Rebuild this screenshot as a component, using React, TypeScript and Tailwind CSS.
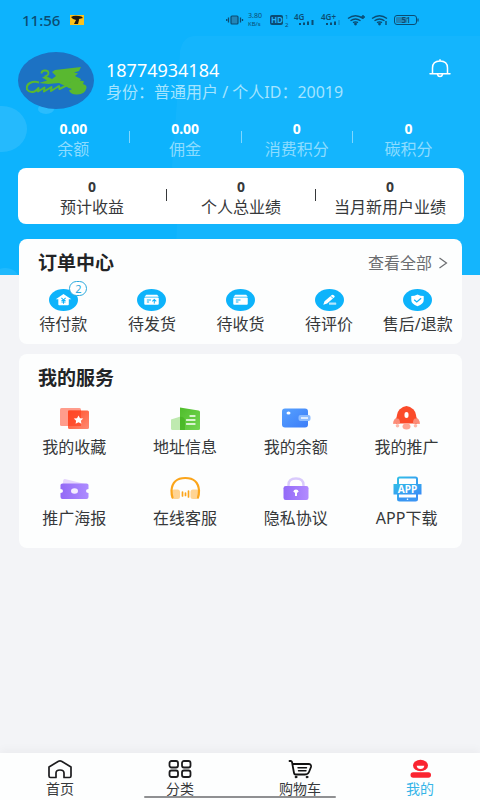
import type { ReactNode } from "react";

const assets = [
  { value: "0.00", label: "余额" },
  { value: "0.00", label: "佣金" },
  { value: "0", label: "消费积分" },
  { value: "0", label: "碳积分" },
];

const earnings = [
  { value: "0", label: "预计收益" },
  { value: "0", label: "个人总业绩" },
  { value: "0", label: "当月新用户业绩" },
];

const orders = [
  { label: "待付款", icon: <HouseYen />, badge: 2 },
  { label: "待发货", icon: <BoxOut /> },
  { label: "待收货", icon: <BoxIn /> },
  { label: "待评价", icon: <Pencil /> },
  { label: "售后/退款", icon: <ShieldCheck /> },
];

const services = [
  { label: "我的收藏", icon: <Favorites /> },
  { label: "地址信息", icon: <Building /> },
  { label: "我的余额", icon: <Wallet /> },
  { label: "我的推广", icon: <Rocket /> },
  { label: "推广海报", icon: <Ticket /> },
  { label: "在线客服", icon: <Headset /> },
  { label: "隐私协议", icon: <Lock /> },
  { label: "APP下载", icon: <AppPhone /> },
];

const tabs = [
  { label: "首页", icon: <HomeIcon /> },
  { label: "分类", icon: <GridIcon /> },
  { label: "购物车", icon: <CartIcon /> },
  { label: "我的", icon: <MeIcon />, active: true },
];

function OrderDisc({ children }: { children: ReactNode }) {
  return (
    <svg className="h-[22px] w-[29px]" viewBox="0 0 28 22" preserveAspectRatio="none" fill="none">
      <ellipse cx="14" cy="11" rx="14" ry="11" fill="#0db3fb" />
      {children}
    </svg>
  );
}

function HouseYen() {
  return (
    <OrderDisc>
      <path d="M14 5 6.500 10.300h2.500V15.500q0 .8.8.8h8.500q.8 0 .8-.8V10.300h2.500Z" fill="#fff" />
      <path d="m12 8.800 2 2.200 2-2.200M12 11.400h4M12 13h4M14 11v3.700" stroke="#0db3fb" strokeWidth="1" />
    </OrderDisc>
  );
}

function BoxOut() {
  return (
    <OrderDisc>
      <path d="M9 5.800h10.500l1.500 2H7.300Z" fill="#fff" />
      <rect x="7" y="8.400" width="14" height="7.400" rx="1" fill="#fff" />
      <path d="M9.500 11h4M9.500 13h2.200M16.700 14.500V11M14.800 12.300l1.900-1.900 1.900 1.900" stroke="#0db3fb" strokeWidth="1" />
    </OrderDisc>
  );
}

function BoxIn() {
  return (
    <OrderDisc>
      <path d="M9 5.800h10.500l1.500 2H7.300Z" fill="#fff" />
      <rect x="7" y="8.400" width="14" height="7.400" rx="1" fill="#fff" />
      <path d="M9.500 11h4.500M9.500 13h2.500" stroke="#0db3fb" strokeWidth="1" />
    </OrderDisc>
  );
}

function Pencil() {
  return (
    <OrderDisc>
      <path d="m8 15.800 1.200-3.500 7-6.300q.7-.6 1.500 0l1 .8q.8.7 0 1.400l-7 6.300Z" fill="#fff" />
      <path d="m15 7.300 2.700 2" stroke="#0db3fb" strokeWidth=".7" />
      <rect x="13.500" y="13.500" width="7" height="2.300" rx=".6" fill="#b4e6fe" />
    </OrderDisc>
  );
}

function ShieldCheck() {
  return (
    <OrderDisc>
      <path d="M14 5.500q2.800 1.500 6 1.500v4q0 4-6 6.300Q8 15 8 11V7q3.200 0 6-1.500Z" fill="#fff" />
      <path d="m10.800 10.800 2.500 2.200 4.200-3.700" stroke="#0db3fb" strokeWidth="1.200" />
    </OrderDisc>
  );
}

function Favorites() {
  return (
    <svg className="h-7 w-8" viewBox="0 0 32 28">
      <defs>
        <linearGradient id="fav" x1="0" y1="0" x2="1" y2="1">
          <stop offset="0" stopColor="#ff4a22" />
          <stop offset="1" stopColor="#ff8b74" />
        </linearGradient>
      </defs>
      <rect x="2" y="4" width="21" height="18" rx="1.500" fill="#ff9d8c" />
      <rect x="10" y="6.500" width="21" height="18.500" rx="1.500" fill="url(#fav)" />
      <path d="M10 6.500h13V22H10Z" fill="#ff4424" opacity=".7" />
      <path d="m20.500 11.500 1.500 2.700 3.200.4-2.300 2.100.5 3-2.900-1.400-2.900 1.400.5-3-2.300-2.100 3.200-.4Z" fill="#fff" />
    </svg>
  );
}

function Building() {
  return (
    <svg className="h-7 w-8" viewBox="0 0 32 28">
      <defs>
        <linearGradient id="bld" x1="0" y1="0" x2="1" y2="1">
          <stop offset="0" stopColor="#4fbd2b" />
          <stop offset="1" stopColor="#74d653" />
        </linearGradient>
      </defs>
      <path d="m2 15.500 9.500-3V26H3.500Q2 26 2 24.500Z" fill="#bfeab0" />
      <path d="m11 3.500 18.500 3Q31 6.800 31 8v16.500q0 1.500-1.500 1.500H11Z" fill="url(#bld)" />
      <path d="M11 12.800q5 0 5 4V26h-5Z" fill="#3fb01c" opacity=".6" />
      <path d="M21 12h5M17.500 16h8.500M17.500 20h8.500" stroke="#fff" strokeWidth="1.300" strokeLinecap="round" />
    </svg>
  );
}

function Wallet() {
  return (
    <svg className="h-7 w-8" viewBox="0 0 32 28">
      <defs>
        <linearGradient id="wal" x1="0" y1="0" x2="1" y2="1">
          <stop offset="0" stopColor="#56a1ff" />
          <stop offset="1" stopColor="#3c7df8" />
        </linearGradient>
      </defs>
      <rect x="2" y="4.500" width="26" height="19" rx="3" fill="url(#wal)" />
      <ellipse cx="8.500" cy="9" rx="2" ry="1.600" fill="#fff" />
      <rect x="18.500" y="11" width="12" height="6" rx="2" fill="#8cbcff" />
      <path d="M21 14h7" stroke="#fff" strokeWidth="1.400" />
    </svg>
  );
}

function Rocket() {
  return (
    <svg className="h-7 w-8" viewBox="0 0 32 28">
      <path d="M6 13q-4 2.500-4 7h4ZM25 13q4 2.500 4 7h-5Z" fill="#ffaa99" />
      <path d="M5 19.500q.500-11 3.500-14Q12 2 15.500 2t7 3.500q3 3 3.500 14Z" fill="#fb4b2a" />
      <path d="M2.500 19.500q0-5 4-5 2.500 0 2.500 5ZM28.500 19.500q0-5-4-5-2.500 0-2.500 5Z" fill="#fb8c78" />
      <rect x="13.500" y="8" width="4" height="6" rx="2" fill="#fff" />
      <ellipse cx="15.500" cy="22.500" rx="4" ry="3" fill="#ffa593" />
      <circle cx="6.500" cy="21.800" r="1.800" fill="#ffb9aa" />
      <circle cx="24.500" cy="21.800" r="1.800" fill="#ffb9aa" />
    </svg>
  );
}

function Ticket() {
  return (
    <svg className="h-7 w-8" viewBox="0 0 32 28">
      <defs>
        <linearGradient id="tic">
          <stop offset="0" stopColor="#9369f6" />
          <stop offset="1" stopColor="#ad8cff" />
        </linearGradient>
      </defs>
      <path d="m7 4 20 5v4H5V8Q5 3.500 7 4Z" fill="#e6d6fd" />
      <path d="M4.500 8.500h24q2 0 2 1.500v4q-2.500 0-2.500 2t2.500 2v4q0 2-2 2h-24q-2 0-2-2v-4q2.500 0 2.500-2t-2.500-2v-4q0-1.500 2-1.500Z" fill="url(#tic)" />
      <ellipse cx="16.500" cy="16" rx="3.500" ry="2.800" fill="#f4ecff" />
    </svg>
  );
}

function Headset() {
  return (
    <svg className="h-7 w-8" viewBox="0 0 32 28" fill="none">
      <rect x="2.500" y="14.500" width="8.500" height="9.500" rx="2.500" fill="#ffd493" />
      <rect x="21.500" y="14.500" width="8.500" height="9.500" rx="2.500" fill="#ffd493" />
      <path d="M3.500 22.500q-1-2-1-7Q3.500 3 16.300 3T30 15.500q0 5-1 7" stroke="#fba51b" strokeWidth="2.200" strokeLinecap="round" />
      <path d="M13.500 17v4M16.500 18v2.500M19.500 16v6" stroke="#fba51b" strokeWidth="1.700" strokeLinecap="round" />
    </svg>
  );
}

function Lock() {
  return (
    <svg className="h-7 w-8" viewBox="0 0 32 28">
      <defs>
        <linearGradient id="lck">
          <stop offset="0" stopColor="#936af8" />
          <stop offset="1" stopColor="#b28bfe" />
        </linearGradient>
      </defs>
      <path d="M8.500 12v-2q0-6.500 7.500-6.500t7.500 6.500v2" fill="none" stroke="#d9cafc" strokeWidth="2.400" />
      <rect x="3.500" y="11" width="25" height="14" rx="2.200" fill="url(#lck)" />
      <ellipse cx="16" cy="16.200" rx="2.400" ry="1.800" fill="#fff" />
      <path d="M16 16v5" stroke="#fff" strokeWidth="2" />
    </svg>
  );
}

function AppPhone() {
  return (
    <svg className="h-7 w-8" viewBox="0 0 32 28">
      <defs>
        <linearGradient id="app" x1="0" y1="0" x2="1" y2="1">
          <stop offset="0" stopColor="#32bde7" />
          <stop offset="1" stopColor="#398bf7" />
        </linearGradient>
      </defs>
      <rect x="7" y="2.500" width="19" height="23" rx="1.500" fill="#fff" stroke="url(#app)" strokeWidth="2" />
      <path d="M7 22.500h19V26H7Z" fill="#3a96f3" />
      <circle cx="16.500" cy="24.300" r=".8" fill="#fff" />
      <rect x="2.500" y="9" width="28" height="10.500" fill="url(#app)" />
      <text x="16.500" y="17.500" textAnchor="middle" fill="#fff" fontSize="10" fontWeight="700" fontFamily="Noto Sans, sans-serif">
        APP
      </text>
    </svg>
  );
}

function HomeIcon() {
  return (
    <svg className="h-5 w-7" viewBox="0 0 28 20" fill="none" stroke="#1c1c1e" strokeWidth="1.700" strokeLinejoin="round">
      <path d="M3 8 12.500 2.200q1.500-.8 3 0L25 8v9q0 1.500-1.500 1.500H18V14q0-3-4-3t-4 3v4.500H4.500Q3 18.500 3 17Z" />
    </svg>
  );
}

function GridIcon() {
  return (
    <svg className="h-5 w-7" viewBox="0 0 28 20" fill="none" stroke="#1c1c1e" strokeWidth="1.800">
      <rect x="3.500" y="2" width="8.500" height="6.500" rx="2" />
      <rect x="16" y="2" width="8.500" height="6.500" rx="2" />
      <rect x="3.500" y="11.500" width="8.500" height="6.500" rx="2" />
      <rect x="16" y="11.500" width="8.500" height="6.500" rx="2" />
    </svg>
  );
}

function CartIcon() {
  return (
    <svg className="h-5 w-7" viewBox="0 0 28 20" fill="none" stroke="#111" strokeLinecap="round" strokeLinejoin="round">
      <path d="M3.500 2h1.200q1 0 1.300 1L8 14q.3 1.500 1.500 1.500H19q3 0 4-2.500l2-5q.5-3-2.500-3H7" strokeWidth="1.800" />
      <path d="M12 8.800h8.500M12.500 11.800H20" strokeWidth="1.400" />
      <circle cx="10" cy="18" r=".9" fill="#111" />
      <circle cx="21" cy="18" r=".9" fill="#111" />
    </svg>
  );
}

function MeIcon() {
  return (
    <svg className="h-5 w-7" viewBox="0 0 28 20">
      <ellipse cx="14.500" cy="6.500" rx="7.500" ry="5.800" fill="#fa2430" />
      <path d="M10.700 6.800h7.600q-.5 3.200-3.800 3.200t-3.800-3.200Z" fill="#fff" />
      <rect x="4.500" y="13.200" width="20.500" height="5.500" rx="2.700" fill="#fa2430" />
    </svg>
  );
}

function StatusIcons() {
  return (
    <svg className="h-5 w-[194px]" viewBox="0 0 194 20" fill="none" stroke="#0b4c73" fontFamily="Noto Sans, sans-serif">
      <rect x="5" y="6" width="7" height="8" rx="1" fill="#2385b8" strokeWidth="1.200" />
      <path d="M2.500 7.500v5M14.500 7.500v5M.7 9v2M16.500 9v2" strokeWidth="1.300" />
      <g fill="#0b4c73" stroke="none">
        <text x="22" y="8" fontSize="7">3.80</text>
        <text x="22" y="16" fontSize="6">KB/s</text>
        <rect x="44" y="5" width="13" height="10" rx="2" />
        <text x="59" y="9" fontSize="6">1</text>
        <text x="59" y="17" fontSize="6">2</text>
        <text x="68" y="9.500" fontSize="8" fontWeight="600">4G</text>
        <path d="M73 13h2v2h-2ZM77 12.500h2V15h-2ZM81 11.500h2V15h-2ZM85.500 10h2v5h-2Z" />
        <text x="95" y="9.500" fontSize="8" fontWeight="600">4G+</text>
        <path d="M100 13h2v2h-2ZM104 12.500h2V15h-2ZM108 11.500h2V15h-2Z" />
        <path d="M112 10h2v5h-2Z" opacity=".25" />
        <circle cx="129.500" cy="14" r="1.400" />
        <circle cx="153.500" cy="14" r="1.400" />
        <text x="45" y="13" fontSize="8" fontWeight="700" fill="#20b4fb">HD</text>
      </g>
      <path d="M122 8.500q7.500-5.400 15 0M124.500 10.700q5-3.500 10 0M127 12.700q2.500-1.700 5 0M134.500 7h4.500M137 5v4" strokeWidth="1.400" />
      <path d="M146 8.500q7.500-5.400 15 0M148.500 10.700q5-3.500 10 0M151 12.700q2.500-1.700 5 0M160 11v4" strokeWidth="1.400" />
      <rect x="168.500" y="5.500" width="22" height="9" rx="2.500" strokeWidth="1" />
      <path d="M192 8.500v3" strokeWidth="1.200" />
      <rect x="170" y="7" width="11" height="6" rx="1" fill="#2385b8" stroke="none" />
      <text x="180" y="13" fontSize="8" fontWeight="600" textAnchor="middle" fill="#0b4c73" stroke="none">51</text>
    </svg>
  );
}

function Avatar() {
  return (
    <svg className="h-[57px] w-[76px] shrink-0" viewBox="0 0 76 57" fill="none">
      <ellipse cx="38" cy="28.500" rx="38" ry="28.500" fill="#1c72c4" />
      <path d="M23.500 21.500q0-3 3.500-3t3.500 2.500-4 3.500" stroke="#59b830" strokeWidth="1.800" />
      <path d="m34 20 3-2 26-3-2 4-5 1.500 4 1-3 2.500 6 3-1.500 3L50 31l-3 3-6-3-11 1-9-1 8-2.500-5-3 4-1.500 6 3 4-3Z" fill="#59b830" />
      <path d="M21 30.500q-5-1.500-9 .5T9 37.500q2.500 3.500 7.500 2 3-1.500 4-3.500l-.5 3.500 6.500-4-.5 4 7.500-4.500-.5 4 8-5 .5 3 8-4" stroke="#59b830" strokeWidth="2" strokeLinejoin="round" />
      <path d="m42 28 10 2.500q3-2.500 8-3l-1 2.500q4-2 7-.5l-1 2.500q4 1 3.500 4-1.500 6-9 6.500-6.500.5-8.500-4l3-1.500q-7-1.500-12-9Z" fill="#59b830" />
    </svg>
  );
}

function Stat({ value, label, className = "" }: { value: string; label: string; className?: string }) {
  return (
    <div className="flex flex-1 basis-0 flex-col items-center whitespace-nowrap">
      <span className="text-sm leading-5 font-bold">{value}</span>
      <span className={`leading-5 ${className}`}>{label}</span>
    </div>
  );
}

function Divider({ className }: { className: string }) {
  return <span className={`mt-3 h-3 w-px shrink-0 ${className}`} />;
}

export default function App() {
  return (
    <div className="flex min-h-screen flex-col bg-[#f3f4f7] font-['Noto_Sans','Noto_Sans_CJK_SC',sans-serif] text-base text-[#36383a]">
      <header className="relative overflow-hidden bg-[#0db3fd] pr-4 pb-[51px] pl-[18px] text-white">
        {/* faint bubbles behind the profile */}
        <svg className="absolute inset-0 h-full w-full" preserveAspectRatio="xMidYMin slice" viewBox="0 0 480 275">
          <path d="M195 36h290v240H172q10-60 0-110 5-60 8-115 3-15 15-15Z" fill="#fff" opacity=".03" />
          <ellipse cx="2" cy="129" rx="25" ry="23" fill="#fff" opacity=".1" />
          <ellipse cx="46" cy="109" rx="8" ry="5" fill="#fff" opacity=".12" />
          <ellipse cx="5" cy="279" rx="14" ry="11" fill="#fff" opacity=".08" />
        </svg>

        <div className="relative flex h-10 items-center pr-11 pl-1">
          <span className="text-[15px] font-medium text-[#0b4c73]">11:56</span>
          <svg className="ml-2.5 h-2.5 w-3.5" viewBox="0 0 14 10">
            <rect width="14" height="10" fill="#fcc21b" />
            <path d="M1 2q3-2 8-1 3 0 4 2l-4 1v1L8 9H4l2-4Q3 5 1 2Z" fill="#1f1a12" />
          </svg>
          <div className="ml-auto">
            <StatusIcons />
          </div>
        </div>

        <div className="relative mt-3 flex items-start">
          <Avatar />
          <div className="ml-3 pt-1.5 whitespace-nowrap">
            <div className="text-lg leading-6">18774934184</div>
            <div className="leading-5 text-[#a4e4ff]">身份：普通用户 / 个人ID：20019</div>
          </div>
          <button aria-label="消息" className="mt-1.5 mr-3 ml-auto">
            <svg className="h-5 w-6" viewBox="0 0 24 20" fill="none" stroke="#fff" strokeWidth="1.500" strokeLinecap="round">
              <path d="M4.500 15V10q0-7 7.500-7t7.500 7v5M2 15.700h20M12 1.800V3M9.500 16.500q.5 2 2.500 2t2.500-2" />
            </svg>
          </button>
        </div>

        <div className="relative mt-2.5 flex">
          {assets.map((item, i) => (
            <div key={item.label} className="contents">
              {i > 0 && <Divider className="bg-[#7fd7ff]" />}
              <Stat {...item} className="text-[#8cdcff]" />
            </div>
          ))}
        </div>

        <div className="relative mt-[9px] flex h-14 rounded-lg bg-white pt-[9px] text-[#36383a]">
          {earnings.map((item, i) => (
            <div key={item.label} className="contents">
              {i > 0 && <Divider className="bg-[#36383a]" />}
              <Stat {...item} />
            </div>
          ))}
        </div>
      </header>

      <main className="relative -mt-9 flex flex-col gap-2.5 pr-[18px] pl-[19px]">
        <section className="h-[105px] rounded-lg bg-[#fdfefe] pt-3">
          <div className="flex items-center justify-between pr-3.5 pl-[19px]">
            <h2 className="text-[19px] leading-6 font-bold text-[#222426]">订单中心</h2>
            <a href="#orders" className="flex items-center gap-1.5 leading-6 text-[#6b6d70]">
              查看全部
              <svg className="h-3 w-2.5" viewBox="0 0 10 12" fill="none" stroke="currentColor" strokeWidth="1.200">
                <path d="m1.500 1 7 5-7 5" />
              </svg>
            </a>
          </div>
          <div className="mt-3.5 grid grid-cols-5">
            {orders.map((item) => (
              <a key={item.label} href="#orders" className="relative flex flex-col items-center gap-[3px] whitespace-nowrap">
                {item.icon}
                {item.badge && (
                  <span className="absolute -top-2 left-1/2 ml-1.5 flex h-[15px] w-[18px] items-center justify-center rounded-full border border-[#2ba9dd] bg-white text-[11px] leading-3 text-[#2ba9dd]">
                    {item.badge}
                  </span>
                )}
                <span className="leading-5">{item.label}</span>
              </a>
            ))}
          </div>
        </section>

        <section className="h-[194px] rounded-lg bg-[#fdfefe] pt-3">
          <h2 className="pl-[19px] text-[19px] leading-6 font-bold text-[#222426]">我的服务</h2>
          <div className="mt-3.5 grid grid-cols-4 gap-y-[18px]">
            {services.map((item) => (
              <a key={item.label} href="#services" className="flex flex-col items-center gap-[5px] whitespace-nowrap">
                {item.icon}
                <span className="leading-5">{item.label}</span>
              </a>
            ))}
          </div>
        </section>
      </main>

      <nav className="relative mt-auto grid h-[47px] grid-cols-4 bg-[#fdfefe] pt-1.5 shadow-[0_-4px_8px_rgba(0,0,0,0.03)]">
        {tabs.map((tab) => (
          <a
            key={tab.label}
            href="#tab"
            className={`flex flex-col items-center text-sm leading-5 ${tab.active ? "text-[#35b5e8]" : "text-[#36383a]"}`}
          >
            {tab.icon}
            {tab.label}
          </a>
        ))}
        <span className="absolute bottom-0.5 left-1/2 h-0.5 w-48 -translate-x-1/2 rounded-full bg-[#8f9092]" />
      </nav>
    </div>
  );
}
